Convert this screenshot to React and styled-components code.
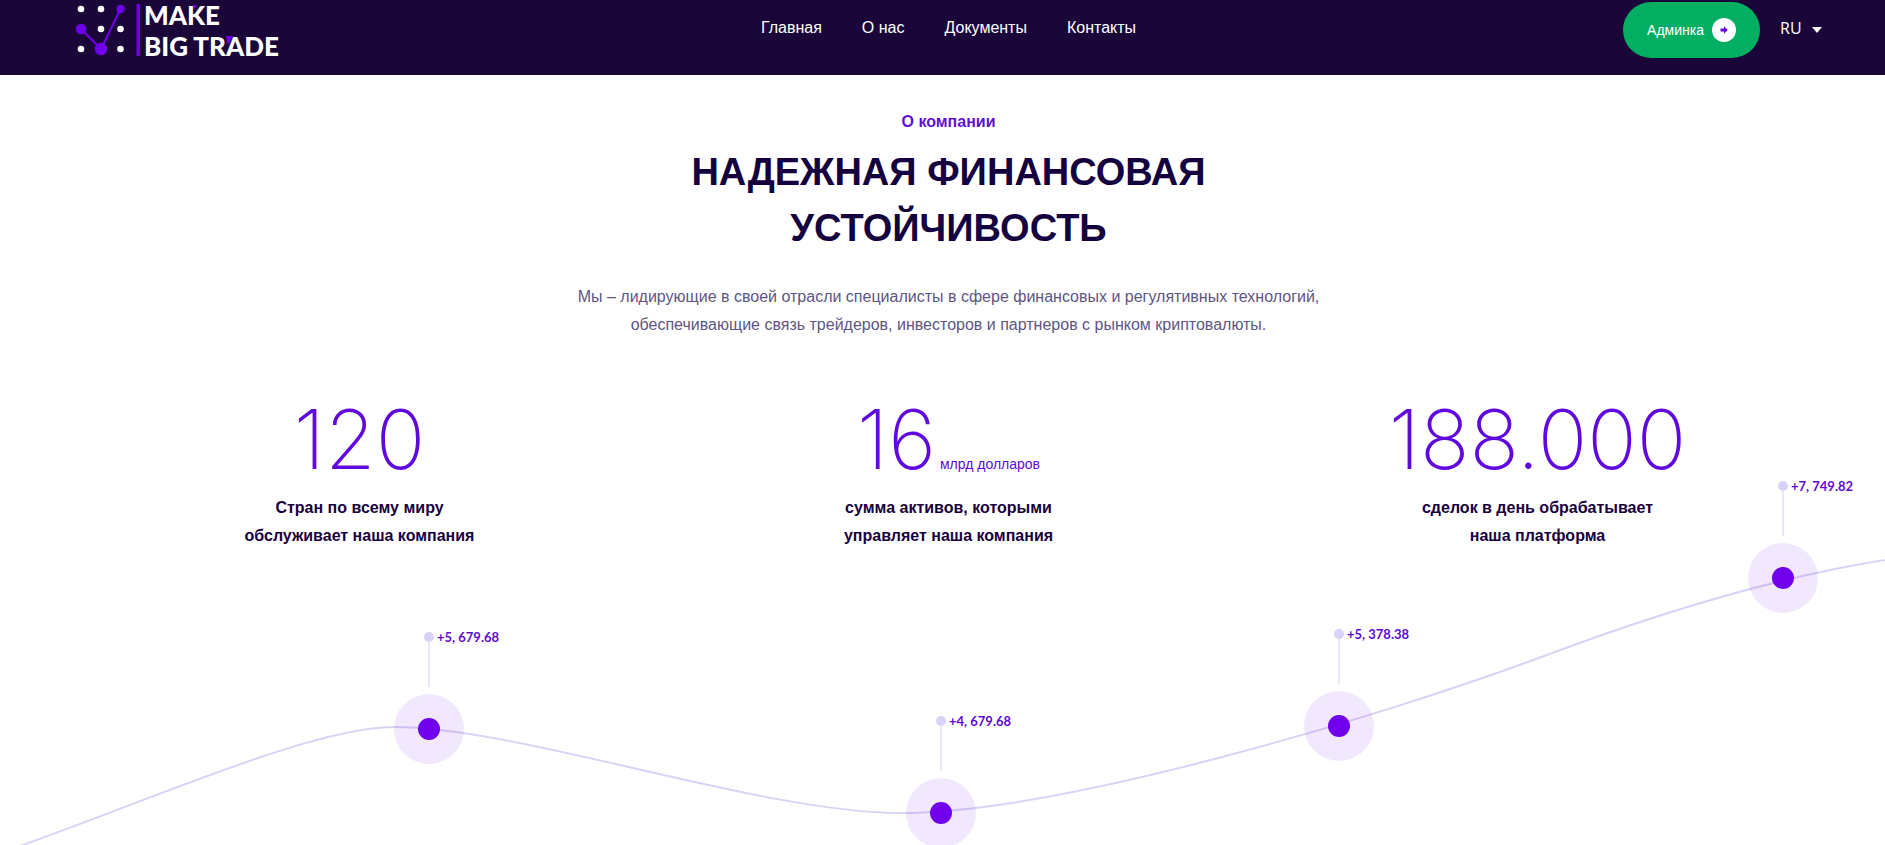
import React from "react";
import styled, { createGlobalStyle } from "styled-components";

const GlobalStyle = createGlobalStyle`
  *, *::before, *::after { box-sizing: border-box; }
  body {
    margin: 0;
    background: #fff;
    color: #180040;
    font-family: "Liberation Sans", Arial, sans-serif;
    font-size: 16px;
    line-height: 28px;
  }
`;

const Header = styled.header`
  display: grid;
  grid-template-columns: 1fr auto 1fr;
  align-items: start;
  height: 75px;
  padding: 0 63px 0 75px;
  background: #1a0638;
  color: #fff;
`;

const Logo = styled.a`
  display: flex;
  gap: 4px;
  justify-self: start;
  color: #fff;
  text-decoration: none;
`;

const LogoMark = styled.svg`
  display: block;
  width: 65px;
  height: 58px;
`;

const LogoText = styled.span`
  position: relative;
  z-index: 0;
  font: 900 26px/31px Lato, sans-serif;
  white-space: nowrap;
`;

const LogoAccent = styled.svg`
  position: absolute;
  z-index: -1;
  top: 0;
  left: 0;
  width: 135px;
  height: 58px;
`;

const Nav = styled.nav`
  display: flex;
  gap: 40px;
  padding-top: 14px;
`;

const NavLink = styled.a`
  color: #fff;
  text-decoration: none;
`;

const Actions = styled.div`
  display: flex;
  align-items: center;
  justify-self: end;
  gap: 20px;
  padding-top: 2px;
`;

const AdminButton = styled.button`
  display: flex;
  align-items: center;
  gap: 8px;
  height: 56px;
  padding: 0 24px;
  border: 0;
  border-radius: 28px;
  background: #02ae62;
  color: #fff;
  font: 14px/20px "Liberation Sans", Arial, sans-serif;
  cursor: pointer;
`;

const Language = styled.label`
  display: grid;
  align-items: center;
`;

const LanguageSelect = styled.select`
  grid-area: 1 / 1;
  width: 42px;
  padding: 0 0 4px;
  border: 0;
  appearance: none;
  background: transparent;
  color: #fff;
  font: 16px/24px "Open Sans", sans-serif;

  option { color: #180040; }
`;

const Caret = styled.svg`
  grid-area: 1 / 1;
  justify-self: end;
  width: 10px;
  height: 6px;
  pointer-events: none;
`;

const About = styled.main`
  padding-top: 33px;
  text-align: center;
`;

const Container = styled.div`
  padding: 0 53px 0 65px;
`;

const Eyebrow = styled.p`
  margin: 0 0 8px;
  color: #5f12d2;
  font-weight: 700;
`;

const Title = styled.h1`
  margin: 0 0 27px;
  color: #14003f;
  font-size: 38px;
  line-height: 56px;
`;

const Lead = styled.p`
  margin: 0;
  color: #5f5584;
`;

const Stats = styled.div`
  display: grid;
  grid-template-columns: repeat(3, 1fr);
  margin-top: 61px;
`;

const Figure = styled.div`
  display: flex;
  align-items: baseline;
  justify-content: center;
  gap: 4px;
  margin-bottom: 14px;
  color: #6008e0;
  font: 200 82px/80px Inter, sans-serif;
`;

const Unit = styled.span`
  font: 14px/20px "Liberation Sans", Arial, sans-serif;
`;

const StatText = styled.p`
  margin: 0;
  color: #180040;
  font-weight: 700;
`;

const Chart = styled.div`
  position: relative;
  overflow: hidden;
  margin-top: -75px;
  aspect-ratio: 1885 / 370;
  pointer-events: none;
`;

const Curve = styled.svg`
  display: block;
  width: 100%;
  height: 100%;
`;

const Pin = styled.div`
  position: absolute;
  display: flex;
  flex-direction: column;
  align-items: center;
  width: 70px;
  transform: translate(-50%, -100px);
`;

const PinTop = styled.div`
  position: relative;
  width: 10px;
  height: 10px;
  margin-top: 3px;
  border-radius: 50%;
  background: #d8d2f6;
`;

const PinLabel = styled.span`
  position: absolute;
  top: -4px;
  left: 13px;
  color: #5f0ad2;
  font: 700 13px/18px Lato, sans-serif;
  white-space: nowrap;
`;

const PinStem = styled.div`
  width: 2px;
  height: 45px;
  margin-bottom: 7px;
  background: #ebe5fa;
`;

const PinDisc = styled.div`
  display: grid;
  place-items: center;
  width: 70px;
  height: 70px;
  border-radius: 50%;
  background: rgba(112, 0, 236, 0.09);

  &::after {
    content: "";
    width: 22px;
    height: 22px;
    border-radius: 50%;
    background: #7000ec;
  }
`;

const links = ["Главная", "О нас", "Документы", "Контакты"];

const stats = [
  { value: "120", lines: ["Стран по всему миру", "обслуживает наша компания"] },
  { value: "16", unit: "млрд долларов", lines: ["сумма активов, которыми", "управляет наша компания"] },
  { value: "188.000", lines: ["сделок в день обрабатывает", "наша платформа"] },
];

const pins = [
  { x: 429, y: 254, label: "+5, 679.68" },
  { x: 941, y: 338, label: "+4, 679.68" },
  { x: 1339, y: 251, label: "+5, 378.38" },
  { x: 1783, y: 103, label: "+7, 749.82" },
];

export default function App() {
  return (
    <>
      <GlobalStyle />
      <Header>
        <Logo href="#" aria-label="Make Big Trade">
          <LogoMark viewBox="75 0 65 58" aria-hidden="true">
            <g fill="#fff">
              <circle cx="81" cy="9" r="3.3" />
              <circle cx="101" cy="9" r="3.3" />
              <circle cx="101" cy="29" r="3.3" />
              <circle cx="120.500" cy="29" r="3.3" />
              <circle cx="81" cy="49" r="3.3" />
              <circle cx="120.500" cy="49" r="3.3" />
            </g>
            <path d="M81 29L101 49L120.500 9" fill="none" stroke="#7000ec" strokeWidth="2" />
            <g fill="#7000ec">
              <circle cx="81" cy="29" r="5.2" />
              <circle cx="101" cy="49" r="6.2" />
              <circle cx="120.500" cy="9" r="4.2" />
              <rect x="136.500" y="4" width="3.500" height="52" rx="1" />
            </g>
          </LogoMark>
          <LogoText>
            <LogoAccent viewBox="144 0 135 58" aria-hidden="true">
              <path d="M193 5h4l-3 4zM226 36h7l-5 9z" fill="#7000ec" />
            </LogoAccent>
            MAKE
            <br />
            BIG TRADE
          </LogoText>
        </Logo>
        <Nav>
          {links.map((text) => (
            <NavLink href="#" key={text}>{text}</NavLink>
          ))}
        </Nav>
        <Actions>
          <AdminButton type="button">
            Админка
            <svg width="24" height="24" viewBox="0 0 24 24" aria-hidden="true">
              <circle cx="12" cy="12" r="12" fill="#fff" />
              <path d="M8.500 10.500h3.500V8.300L15.800 12 12 15.700v-2.200H8.500z" fill="#6408dc" />
            </svg>
          </AdminButton>
          <Language>
            <LanguageSelect aria-label="Язык" defaultValue="RU">
              <option>RU</option>
              <option>EN</option>
            </LanguageSelect>
            <Caret viewBox="0 0 10 6" aria-hidden="true">
              <path d="M0 0h10L5 6z" fill="#fff" />
            </Caret>
          </Language>
        </Actions>
      </Header>
      <About>
        <Container>
          <Eyebrow>О компании</Eyebrow>
          <Title>
            НАДЕЖНАЯ ФИНАНСОВАЯ
            <br />
            УСТОЙЧИВОСТЬ
          </Title>
          <Lead>
            Мы – лидирующие в своей отрасли специалисты в сфере финансовых и регулятивных технологий,
            <br />
            обеспечивающие связь трейдеров, инвесторов и партнеров с рынком криптовалюты.
          </Lead>
          <Stats>
            {stats.map(({ value, unit, lines }) => (
              <div key={value}>
                <Figure>
                  {value}
                  {unit && <Unit>{unit}</Unit>}
                </Figure>
                <StatText>
                  {lines[0]}
                  <br />
                  {lines[1]}
                </StatText>
              </div>
            ))}
          </Stats>
        </Container>
        <Chart>
          <Curve viewBox="0 475 1885 370" preserveAspectRatio="none" aria-hidden="true">
            <path
              d="M0 853C140 805 310 727 394 727C520 727 760 813 901 813C1060 813 1380 717 1540 657.500C1650 616 1770 578 1885 560"
              fill="none"
              stroke="#d8d4f4"
              strokeWidth="2"
            />
          </Curve>
          {pins.map(({ x, y, label }) => (
            <Pin key={x} style={{ left: `${(x / 1885) * 100}%`, top: `${(y / 370) * 100}%` }}>
              <PinTop>
                <PinLabel>{label}</PinLabel>
              </PinTop>
              <PinStem />
              <PinDisc />
            </Pin>
          ))}
        </Chart>
      </About>
    </>
  );
}
